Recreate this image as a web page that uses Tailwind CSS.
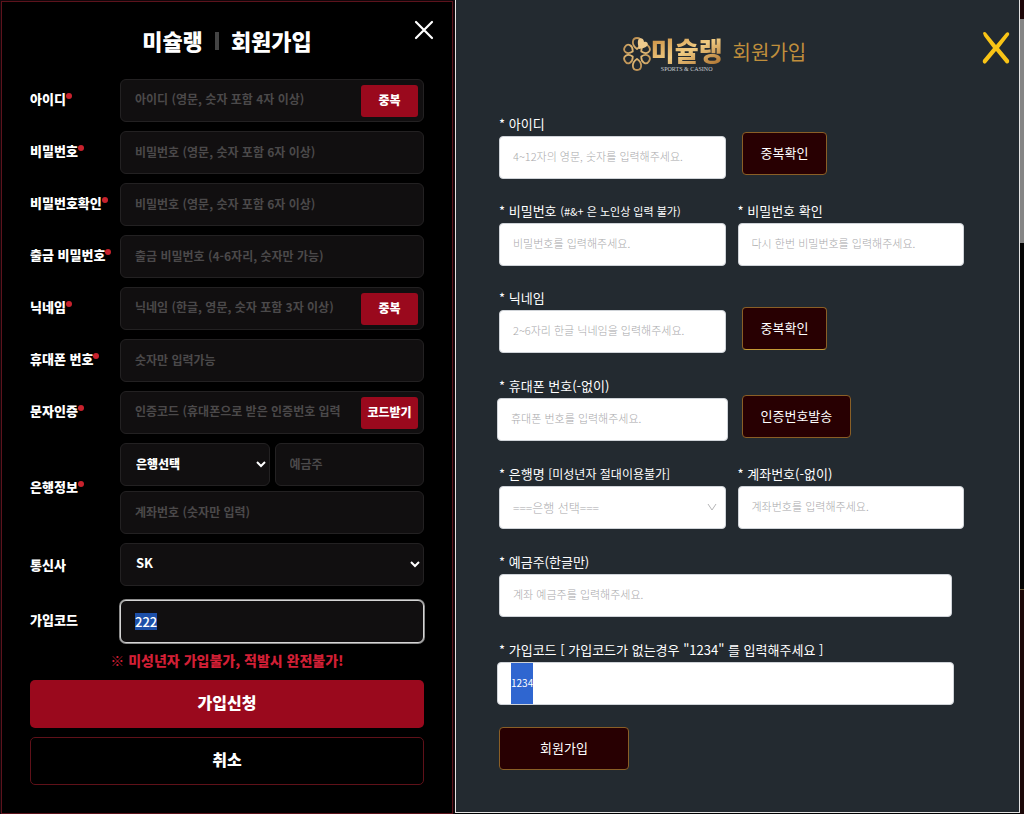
<!DOCTYPE html>
<html lang="ko">
<head>
    <meta charset="UTF-8">
    <meta name="viewport" content="width=device-width, initial-scale=1.0">
    <title>미슐랭 회원가입</title>
    <script src="https://cdn.jsdelivr.net/npm/@tailwindcss/browser@4"></script>
</head>
<body class="min-h-screen bg-black font-['Noto_Sans_CJK_KR','Noto_Sans',sans-serif] grid grid-cols-[minmax(0,455fr)_minmax(0,565fr)_4px]">

    <!-- Dark form -->
    <div class="bg-[#12060a] p-px pr-0.5 flex flex-col">
        <section class="relative flex-1 bg-black border border-[#5c131c] px-7 pb-7 text-white">
            <header class="h-[77px] flex items-center justify-center gap-3 text-[22px] font-black">
                <h1>미슐랭</h1>
                <span class="w-1 h-[18px] bg-[#444]"></span>
                <h2>회원가입</h2>
                <button type="button" aria-label="닫기" class="absolute top-[18px] right-[18px]">
                    <svg class="w-5 h-5" viewBox="0 0 20 20" fill="none" stroke="#fff" stroke-width="2.2" stroke-linecap="round"><path d="M2 2L18 18M18 2L2 18"/></svg>
                </button>
            </header>

            <form class="text-[13px] font-black">
                <div class="space-y-[9px]">
                    <div class="flex items-center">
                        <label for="userId" class="w-[90px] pb-1 shrink-0 whitespace-nowrap flex">아이디<i class="w-[6px] h-[6px] mt-1 rounded-full bg-[#c8222d]"></i></label>
                        <div class="flex-1 min-w-0 h-[43px] flex items-center rounded-md border border-[#232122] bg-[#110f10] pl-[14px] pr-[5px]">
                            <input type="text" id="userId" placeholder="아이디 (영문, 숫자 포함 4자 이상)" class="flex-1 min-w-0 pb-[3px] text-[12px] font-bold outline-none placeholder:text-[#4b494a]">
                            <button type="button" class="w-[57px] h-8 pb-[2px] shrink-0 rounded-[3px] bg-[#9a091d] text-[12px] font-black">중복</button>
                        </div>
                    </div>

                    <div class="flex items-center">
                        <label for="userPw" class="w-[90px] pb-1 shrink-0 whitespace-nowrap flex">비밀번호<i class="w-[6px] h-[6px] mt-1 rounded-full bg-[#c8222d]"></i></label>
                        <input type="password" id="userPw" placeholder="비밀번호 (영문, 숫자 포함 6자 이상)" class="flex-1 min-w-0 h-[43px] rounded-md border border-[#232122] bg-[#110f10] px-[14px] pb-[3px] text-[12px] font-bold outline-none placeholder:text-[#4b494a]">
                    </div>

                    <div class="flex items-center">
                        <label for="userPw2" class="w-[90px] pb-1 shrink-0 whitespace-nowrap flex">비밀번호확인<i class="w-[6px] h-[6px] mt-1 rounded-full bg-[#c8222d]"></i></label>
                        <input type="password" id="userPw2" placeholder="비밀번호 (영문, 숫자 포함 6자 이상)" class="flex-1 min-w-0 h-[43px] rounded-md border border-[#232122] bg-[#110f10] px-[14px] pb-[3px] text-[12px] font-bold outline-none placeholder:text-[#4b494a]">
                    </div>

                    <div class="flex items-center">
                        <label for="outPw" class="w-[90px] pb-1 shrink-0 whitespace-nowrap flex">출금 비밀번호<i class="w-[6px] h-[6px] mt-1 rounded-full bg-[#c8222d]"></i></label>
                        <input type="password" id="outPw" placeholder="출금 비밀번호 (4-6자리, 숫자만 가능)" class="flex-1 min-w-0 h-[43px] rounded-md border border-[#232122] bg-[#110f10] px-[14px] pb-[3px] text-[12px] font-bold outline-none placeholder:text-[#4b494a]">
                    </div>

                    <div class="flex items-center">
                        <label for="nick" class="w-[90px] pb-1 shrink-0 whitespace-nowrap flex">닉네임<i class="w-[6px] h-[6px] mt-1 rounded-full bg-[#c8222d]"></i></label>
                        <div class="flex-1 min-w-0 h-[43px] flex items-center rounded-md border border-[#232122] bg-[#110f10] pl-[14px] pr-[5px]">
                            <input type="text" id="nick" placeholder="닉네임 (한글, 영문, 숫자 포함 3자 이상)" class="flex-1 min-w-0 pb-[3px] text-[12px] font-bold outline-none placeholder:text-[#4b494a]">
                            <button type="button" class="w-[57px] h-8 pb-[2px] shrink-0 rounded-[3px] bg-[#9a091d] text-[12px] font-black">중복</button>
                        </div>
                    </div>

                    <div class="flex items-center">
                        <label for="phone" class="w-[90px] pb-1 shrink-0 whitespace-nowrap flex">휴대폰 번호<i class="w-[6px] h-[6px] mt-1 rounded-full bg-[#c8222d]"></i></label>
                        <input type="text" id="phone" placeholder="숫자만 입력가능" class="flex-1 min-w-0 h-[43px] rounded-md border border-[#232122] bg-[#110f10] px-[14px] pb-[3px] text-[12px] font-bold outline-none placeholder:text-[#4b494a]">
                    </div>

                    <div class="flex items-center">
                        <label for="sms" class="w-[90px] pb-1 shrink-0 whitespace-nowrap flex">문자인증<i class="w-[6px] h-[6px] mt-1 rounded-full bg-[#c8222d]"></i></label>
                        <div class="flex-1 min-w-0 h-[43px] flex items-center gap-3 rounded-md border border-[#232122] bg-[#110f10] pl-[14px] pr-[5px]">
                            <input type="text" id="sms" placeholder="인증코드 (휴대폰으로 받은 인증번호 입력" class="flex-1 min-w-0 pb-[3px] text-[12px] font-bold outline-none placeholder:text-[#4b494a]">
                            <button type="button" class="w-[57px] h-8 pb-[2px] shrink-0 rounded-[3px] bg-[#9a091d] text-[12px] font-black">코드받기</button>
                        </div>
                    </div>

                    <div class="flex items-center">
                        <label for="bank" class="w-[90px] pb-1 shrink-0 whitespace-nowrap flex">은행정보<i class="w-[6px] h-[6px] mt-1 rounded-full bg-[#c8222d]"></i></label>
                        <div class="flex-1 min-w-0 grid grid-cols-2 gap-[5px]">
                            <div class="relative">
                                <select id="bank" class="appearance-none w-full h-[43px] rounded-md border border-[#232122] bg-[#110f10] px-[15px] pb-[2px] text-[12px] font-black outline-none">
                                    <option>은행선택</option>
                                </select>
                                <svg class="absolute right-1 top-4 w-[10px] h-[10px] pointer-events-none" viewBox="0 0 10 10" fill="none" stroke="#fff" stroke-width="2"><path d="M1 3L5 7L9 3"/></svg>
                            </div>
                            <input type="text" aria-label="예금주" placeholder="예금주" class="min-w-0 h-[43px] rounded-md border border-[#232122] bg-[#110f10] px-[14px] pb-[3px] text-[12px] font-bold outline-none placeholder:text-[#4b494a]">
                            <input type="text" aria-label="계좌번호" placeholder="계좌번호 (숫자만 입력)" class="col-span-2 min-w-0 h-[43px] rounded-md border border-[#232122] bg-[#110f10] px-[14px] pb-[3px] text-[12px] font-bold outline-none placeholder:text-[#4b494a]">
                        </div>
                    </div>

                    <div class="flex items-center">
                        <label for="telecom" class="w-[90px] shrink-0">통신사</label>
                        <div class="relative flex-1 min-w-0">
                            <select id="telecom" class="appearance-none w-full h-[43px] rounded-md border border-[#232122] bg-[#110f10] px-[15px] pb-[3px] text-[13px] font-bold outline-none">
                                <option>SK</option>
                            </select>
                            <svg class="absolute right-1 top-4 w-[10px] h-[10px] pointer-events-none" viewBox="0 0 10 10" fill="none" stroke="#fff" stroke-width="2"><path d="M1 3L5 7L9 3"/></svg>
                        </div>
                    </div>
                </div>

                <div class="flex items-center mt-[14px]">
                    <label for="joinCode" class="w-[90px] pb-1 shrink-0">가입코드</label>
                    <input type="text" id="joinCode" value="222" class="flex-1 min-w-0 h-[43px] rounded-md border border-[#d5d5d5] ring-1 ring-[#8b8b8b] bg-[#110f10] bg-[linear-gradient(#1d4fa8,#1d4fa8)] bg-no-repeat bg-[length:22px_17px] bg-[position:14px_center] px-[14px] text-[13px] font-medium outline-none">
                </div>

                <p class="h-[37px] leading-[34px] text-center text-[14px] text-[#d11f35]">※ 미성년자 가입불가, 적발시 완전불가!</p>

                <button type="submit" class="block w-full h-12 rounded-[5px] bg-[#9a091d] pb-1 text-[16px] font-black">가입신청</button>
                <button type="button" class="block w-full h-12 mt-[9px] rounded-[5px] border border-[#5f1119] pb-1 text-[16px] font-black">취소</button>
            </form>
        </section>
    </div>

    <!-- Slate form -->
    <section class="relative mb-[2px] bg-[#232a30] border-l border-b border-r border-[#e4e4e4] pl-[43px] pr-[55px] text-white">
        <header class="h-[116px] pt-9 flex justify-center items-start gap-[10px] mr-[34px]">
            <div class="flex">
                <svg class="w-[28px] h-[36px]" viewBox="0 0 28 36" fill="none" stroke="url(#gold)" stroke-width="1.8">
                    <defs>
                        <linearGradient id="gold" x1="-14" y1="-18" x2="14" y2="18" gradientUnits="userSpaceOnUse">
                            <stop offset="0" stop-color="#9a6c35"/><stop offset=".45" stop-color="#e6bd78"/><stop offset="1" stop-color="#b07a32"/>
                        </linearGradient>
                    </defs>
                    <g transform="translate(14 18)">
                        <path d="M0 -5C-6 -9 -5 -16 0 -16C5 -16 6 -9 0 -5Z"/>
                        <path transform="rotate(60)" d="M0 -5C-6 -8 -5 -14 0 -14C5 -14 6 -8 0 -5Z"/>
                        <path transform="rotate(120)" d="M0 -5C-6 -8 -5 -14 0 -14C5 -14 6 -8 0 -5Z"/>
                        <path transform="rotate(180)" d="M0 -5C-6 -9 -5 -16 0 -16C5 -16 6 -9 0 -5Z"/>
                        <path transform="rotate(240)" d="M0 -5C-6 -8 -5 -14 0 -14C5 -14 6 -8 0 -5Z"/>
                        <path transform="rotate(300)" d="M0 -5C-6 -8 -5 -14 0 -14C5 -14 6 -8 0 -5Z"/>
                        <path d="M2 -5C1 -9 0 -13 2 -15C4 -17 7 -15 7 -12C10 -13 12 -10 10 -8C8 -6 5 -6 2 -5Z" fill="#efcb8d" stroke="none"/>
                    </g>
                </svg>
                <div class="flex flex-col items-center">
                    <span class="h-[30px] leading-[28px] text-[26px] font-black text-transparent bg-clip-text bg-linear-to-br from-[#c88a3a] via-[#f0cb82] to-[#a66a26]">미슐랭</span>
                    <span class="text-[6px] leading-[6px] font-['Liberation_Serif',serif] text-[#c9ccd0]">SPORTS &amp; CASINO</span>
                </div>
            </div>
            <h1 class="text-[20px] leading-[32px] text-[#c08f3c]">회원가입</h1>
            <button type="button" aria-label="닫기" class="absolute top-[31px] right-[9px]">
                <svg class="w-[28px] h-[34px]" viewBox="0 0 28 34" fill="#f9c416"><path d="M1 2C2 0 4 1 5 3L14 14L24 2C26 0 28 2 27 4L17 17L27 29C28 32 25 34 23 31L14 20L4 32C2 34 0 31 1 29L11 17L2 5Z"/></svg>
            </button>
        </header>

        <form class="text-[13px] leading-4">
            <div class="space-y-6">
                <div class="grid grid-cols-2 gap-x-3">
                    <div class="flex flex-col">
                        <label for="rId" class="h-5 whitespace-nowrap">* 아이디</label>
                        <input type="text" id="rId" placeholder="4~12자의 영문, 숫자를 입력해주세요." class="w-full h-[43px] rounded bg-white border border-[#cfd3d8] px-[13px] pb-[3px] text-[11px] font-light text-black outline-none placeholder:text-[#a9a9ab]">
                    </div>
                    <div class="pt-4 pl-1">
                        <button type="button" class="h-[43px] px-[18px] pb-[2px] rounded border border-[#8a5f26] bg-[#280002] text-[13px]">중복확인</button>
                    </div>
                </div>

                <div class="grid grid-cols-2 gap-x-3">
                    <div class="flex flex-col">
                        <label for="rPw" class="h-5 whitespace-nowrap">* 비밀번호 <small class="text-[11px]">(#&amp;+ 은 노인상 입력 불가)</small></label>
                        <input type="password" id="rPw" placeholder="비밀번호를 입력해주세요." class="w-full h-[43px] rounded bg-white border border-[#cfd3d8] px-[13px] pb-[3px] text-[11px] font-light text-black outline-none placeholder:text-[#a9a9ab]">
                    </div>
                    <div class="flex flex-col">
                        <label for="rPw2" class="h-5 whitespace-nowrap">* 비밀번호 확인</label>
                        <input type="password" id="rPw2" placeholder="다시 한번 비밀번호를 입력해주세요." class="w-full h-[43px] rounded bg-white border border-[#cfd3d8] px-[13px] pb-[3px] text-[11px] font-light text-black outline-none placeholder:text-[#a9a9ab]">
                    </div>
                </div>

                <div class="grid grid-cols-2 gap-x-3">
                    <div class="flex flex-col">
                        <label for="rNick" class="h-5 whitespace-nowrap">* 닉네임</label>
                        <input type="text" id="rNick" placeholder="2~6자리 한글 닉네임을 입력해주세요." class="w-full h-[43px] rounded bg-white border border-[#cfd3d8] px-[13px] pb-[3px] text-[11px] font-light text-black outline-none placeholder:text-[#a9a9ab]">
                    </div>
                    <div class="pt-[17px] pl-1">
                        <button type="button" class="h-[43px] px-[18px] pb-[2px] rounded border border-[#8a5f26] border-b-[#c49a36] bg-[#280002] text-[13px]">중복확인</button>
                    </div>
                </div>
            </div>

            <div class="space-y-[25px] mt-[25px]">
                <div class="grid grid-cols-2 gap-x-3">
                    <div class="flex flex-col">
                        <label for="rPhone" class="h-5 whitespace-nowrap">* 휴대폰 번호(-없이)</label>
                        <input type="text" id="rPhone" placeholder="휴대폰 번호를 입력해주세요." class="h-[43px] -mx-[2px] rounded bg-white border border-[#cfd3d8] px-[13px] pb-[3px] text-[11px] font-light text-black outline-none placeholder:text-[#a9a9ab]">
                    </div>
                    <div class="pt-[17px] pl-1">
                        <button type="button" class="h-[43px] px-[18px] pb-[2px] rounded border border-[#8a5f26] bg-[#280002] text-[13px]">인증번호발송</button>
                    </div>
                </div>

                <div class="grid grid-cols-2 gap-x-3">
                    <div class="flex flex-col">
                        <label for="rBank" class="h-5 whitespace-nowrap">* 은행명 <small class="text-[12px]">[미성년자 절대이용불가]</small></label>
                        <div class="relative">
                            <select id="rBank" class="appearance-none w-full h-[43px] rounded bg-white border border-[#cfd3d8] px-[13px] text-[12px] font-light text-[#a9a9ab] outline-none">
                                <option>===은행 선택===</option>
                            </select>
                            <svg class="absolute right-[9px] top-4 w-[10px] h-[10px] pointer-events-none" viewBox="0 0 10 10" fill="none" stroke="#b5b5b7" stroke-width="1"><path d="M1 2L5 8L9 2"/></svg>
                        </div>
                    </div>
                    <div class="flex flex-col">
                        <label for="rAcc" class="h-5 whitespace-nowrap">* 계좌번호(-없이)</label>
                        <input type="text" id="rAcc" placeholder="계좌번호를 입력해주세요." class="w-full h-[43px] rounded bg-white border border-[#cfd3d8] px-[13px] pb-[3px] text-[11px] font-light text-black outline-none placeholder:text-[#a9a9ab]">
                    </div>
                </div>

                <div class="flex flex-col mr-3">
                    <label for="rOwner" class="h-5">* 예금주(한글만)</label>
                    <input type="text" id="rOwner" placeholder="계좌 예금주를 입력해주세요." class="w-full h-[43px] rounded bg-white border border-[#cfd3d8] px-[13px] pb-[3px] text-[11px] font-light text-black outline-none placeholder:text-[#a9a9ab]">
                </div>

                <div class="flex flex-col mr-3">
                    <label for="rCode" class="h-5">* 가입코드 [ 가입코드가 없는경우 "1234" 를 입력해주세요 ]</label>
                    <input type="text" id="rCode" value="1234" class="h-[43px] -mx-[2px] rounded bg-white bg-[linear-gradient(#2f66d0,#2f66d0)] bg-no-repeat bg-[length:22px_100%] bg-[position:13px_0] border border-[#cfd3d8] px-[13px] pb-[3px] text-[10px] outline-none">
                </div>
            </div>

            <button type="submit" class="mt-[22px] w-[130px] h-[43px] pb-[2px] rounded border border-[#8a5f26] bg-[#280002] text-[13px]">회원가입</button>
        </form>
    </section>

    <!-- Page behind the window -->
    <div class="flex flex-col">
        <div class="h-[19px] bg-[#1c0507]"></div>
        <div class="h-56 bg-[#858585]"></div>
        <div class="h-[347px] bg-[#050505] border-b border-[#6b5a3a]"></div>
        <div class="flex-1 bg-[#1c0808]"></div>
    </div>
</body>
</html>
